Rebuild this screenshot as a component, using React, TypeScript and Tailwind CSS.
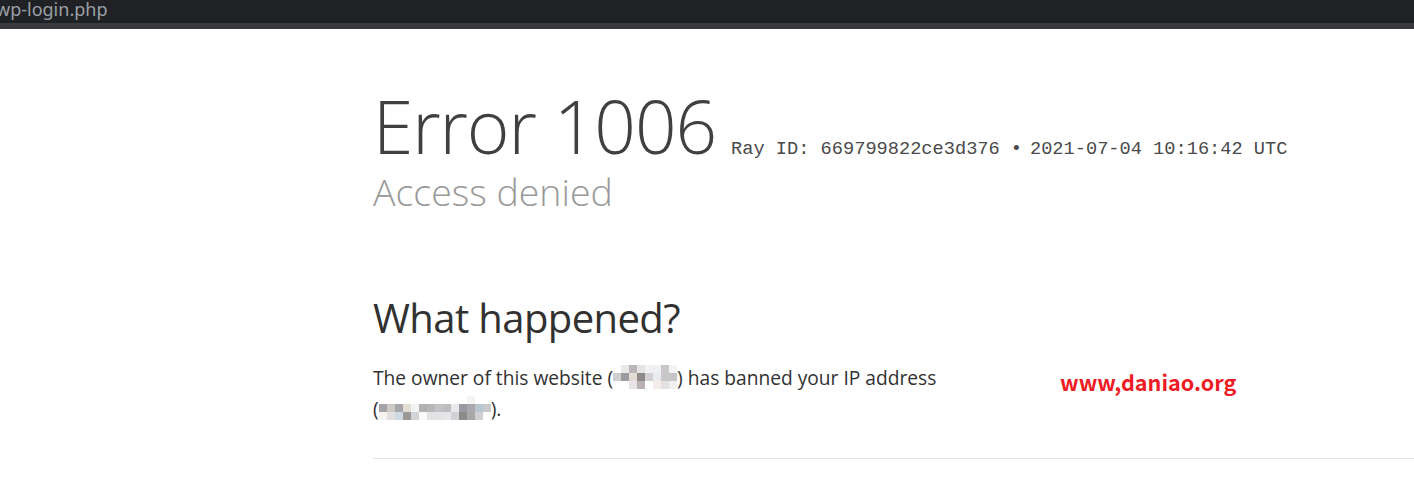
import React from "react";

const SITE_BLUR = [
  ["#ffffff", "#e8e8e8", "#b9b5b8", "#e4e4e4", "#f1f1f1", "#eef1f4", "#c9c7c9", "#f4f4f4"],
  ["#d0ced0", "#9d9aa0", "#e2dbd3", "#8f8a8a", "#d2d0d2", "#e9ebee", "#c8c6c8", "#c6c4c6"],
  ["#ffffff", "#ffffff", "#e6e4e6", "#b9b2b0", "#ffffff", "#f3ece8", "#e2e0e2", "#f0f0f0"],
];

const IP_BLUR = [
  ["#ffffff", "#ffffff", "#ffffff", "#ffffff", "#ffffff", "#ffffff", "#ffffff", "#ffffff", "#ffffff", "#ffffff", "#ffffff", "#f4f4f4", "#ffffff", "#ffffff"],
  ["#a4a3a8", "#cfc9c6", "#a6a5a9", "#e4ddd6", "#f2f2f2", "#b3b0b0", "#b8b6b8", "#c4c2c4", "#bdbcbe", "#e9e9e9", "#9a98a0", "#a9a8ad", "#b9c6d0", "#c9c9cc"],
  ["#f6f2f0", "#e3dfe1", "#cfd9e2", "#9b9998", "#d2d4d6", "#f8fafc", "#e2e2e4", "#e4e2e4", "#e4e6ea", "#d2d2d6", "#8f8a8a", "#a8a6a8", "#d0d0d2", "#ffffff"],
];

function Mosaic({ cells }: { cells: string[][] }) {
  return (
    <span className="inline-block overflow-hidden align-[-4px]">
      {cells.map((row, r) => (
        <span key={r} className="flex">
          {row.map((c, i) => (
            <span key={i} className="block w-[8px] h-[8px]" style={{ backgroundColor: c }} />
          ))}
        </span>
      ))}
    </span>
  );
}

export default function App() {
  return (
    <div className="w-[1414px] h-[504px] bg-white overflow-hidden font-['Open_Sans',sans-serif]">
      {/* browser tab strip, cut off */}
      <div className="h-[23px] bg-[#202124] overflow-hidden">
        <span className="block -ml-[4px] -mt-[5px] text-[18px] leading-[28px] text-[#9aa0a6] font-['Noto_Sans',sans-serif]">
          wp-login.php
        </span>
      </div>
      <div className="h-[6px] bg-[#38393d]" />

      <div className="pl-[373px] pt-[57px]">
        <div className="flex items-baseline">
          <h1 className="text-[73px] leading-[80px] font-light text-[#404040] tracking-[-0.015em]">
            Error 1006
          </h1>
          <span className="ml-[15px] font-['Liberation_Mono',monospace] text-[18.67px] text-[#4a4a4a] whitespace-pre">
            Ray ID: 669799822ce3d376
          </span>
          <span className="ml-[11px] mr-[8px] font-['Liberation_Mono',monospace] text-[18.67px] text-[#4a4a4a]">•</span>
          <span className="font-['Liberation_Mono',monospace] text-[18.67px] text-[#4a4a4a] whitespace-pre">
            2021-07-04 10:16:42 UTC
          </span>
        </div>
        <h2 className="text-[37.5px] leading-[48px] font-light text-[#999999] mt-[2px]">
          Access denied
        </h2>

        <h2 className="mt-[76px] text-[40px] leading-[52px] font-normal text-[#313131] tracking-[-0.015em]">
          What happened?
        </h2>

        <div className="relative mt-[18px]">
          <p className="text-[19.2px] leading-[31px] text-[#313131] w-[640px]">
            The owner of this website (<Mosaic cells={SITE_BLUR} />) has banned your IP address
            <br />(<Mosaic cells={IP_BLUR} />).
          </p>
          <span className="absolute left-[687px] top-[4px] text-[21.6px] font-bold text-[#ee1c25] font-['Noto_Sans_CJK_SC','Noto_Sans',sans-serif]">
            www,daniao.org
          </span>
        </div>

        <div className="mt-[34px] h-[1px] bg-[#e5e5e5]" />
      </div>
    </div>
  );
}
